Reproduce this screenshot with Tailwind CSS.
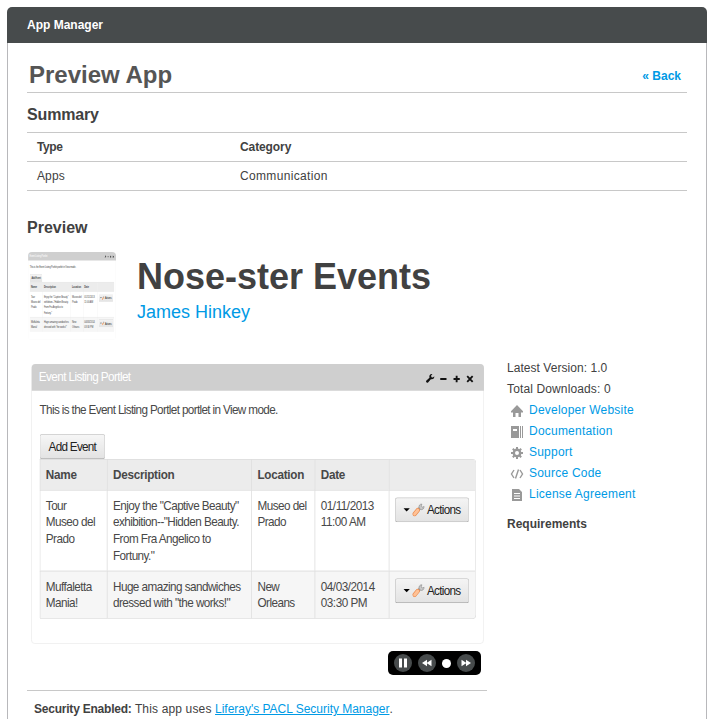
<!DOCTYPE html>
<html lang="en">
<head>
<meta charset="utf-8">
<title>App Manager</title>
<script src="https://cdn.jsdelivr.net/npm/@tailwindcss/browser@4"></script>
</head>
<body class="w-[710px] h-[719px] overflow-hidden bg-white pl-[7px] pt-[7px] font-['Liberation_Sans',Arial,sans-serif] text-[12px] leading-[21px] text-[#414141]">
<main class="w-[700px] h-[712px]">
  <header class="h-9 rounded-t-[5px] bg-[#474b4c] px-5 pt-[8px] font-bold text-white">App Manager</header>
  <div class="h-[676px] border-x border-[#b8b8bb] px-[19px] pt-[18px]">
    <div class="h-8 flex justify-between border-b border-[#c8c8c8] pl-[2px] pr-[6px]">
      <h1 class="text-[24px] leading-[28px] font-bold text-[#555]">Preview App</h1>
      <a class="pt-[5px] font-bold text-[#009ae5]">« Back</a>
    </div>
    <h2 class="h-[39px] pt-[11px] text-[16px] font-bold tracking-[-0.15px]">Summary</h2>
    <table class="w-full table-fixed border-collapse text-left">
      <colgroup><col class="w-[203px]"><col></colgroup>
      <tr class="h-[29px] border-y border-[#c8c8c8]"><th class="pl-[10px] tracking-[-0.4px]">Type</th><th class="pl-[10px] tracking-[-0.1px]">Category</th></tr>
      <tr class="h-[29px] border-b border-[#c8c8c8]"><td class="pl-[10px] tracking-[0.1px]">Apps</td><td class="pl-[10px] tracking-[0.33px]">Communication</td></tr>
    </table>
    <h2 class="h-[61px] pt-[26px] text-[16px] font-bold">Preview</h2>
    <section class="flex h-[112px]">
      <div class="ml-px h-[88px] w-[88px] shrink-0 overflow-hidden rounded-[4px]"><div id="thumb" class="h-[336px] w-[580px] origin-top-left scale-x-[0.1517] scale-y-[0.2619]"></div></div>
      <div class="ml-[21px]">
        <div class="h-[48px] pt-[3px] text-[36px] leading-[44px] font-bold">Nose-ster Events</div>
        <a class="block text-[18px] leading-[24px] text-[#009ae5]">James Hinkey</a>
      </div>
    </section>
    <section class="flex h-[355px]">
      <div class="w-[460px]">
        <div class="ml-[4px] h-[287px] w-[453px]">
          <div id="portlet" class="h-[336px] w-[580px] origin-top-left scale-x-[0.781] scale-y-[0.8333]">
            <div class="h-full rounded-[5px] border border-[#ececec] bg-white text-[15px] leading-[20px] tracking-[-0.7px] text-[#484848]">
              <div class="-mr-px -mt-px flex h-8 items-center justify-between rounded-t-[5px] bg-[#cfcfcf] pl-[9px] pr-[12px] text-white">
                <span class="tracking-[-0.76px]">Event Listing Portlet</span>
                <span class="flex items-center gap-[5px] text-[#111]">
                  <svg class="mt-[2px] h-3 w-3" viewBox="0 0 12 12"><path d="M1 9.2 5.2 5.6C4.4 2.5 6.2.6 9 1L7.2 3l.6 1.8 1.8.4L11.5 3.8C11.6 6.5 9.5 8 7 7.2L3.4 11.2C1.8 12 .2 10.6 1 9.2Z" fill="currentColor"/></svg>
                  <svg class="mt-[3px] h-3 w-3" viewBox="0 0 12 12"><path d="M2 6h8" stroke="currentColor" stroke-width="2.6"/></svg>
                  <svg class="mt-[3px] h-3 w-3" viewBox="0 0 12 12"><path d="M2 6h8M6 2v8" stroke="currentColor" stroke-width="2.4"/></svg>
                  <svg class="mt-[3px] h-3 w-3" viewBox="0 0 12 12"><path d="m2.500 2.500 7 7M9.500 2.500l-7 7" stroke="currentColor" stroke-width="2.4"/></svg>
                </span>
              </div>
              <div class="px-[10px]">
                <p class="h-[52px] pt-[13px] tracking-[-0.82px]">This is the Event Listing Portlet portlet in View mode.</p>
                <button class="block h-[30px] w-[84px] rounded-[3px] border border-[#c6c6c6] border-b-[#aaa] bg-linear-to-b from-[#f6f6f6] to-[#e3e3e3] text-[#222] tracking-[-0.93px]">Add Event</button>
                <table class="w-[559px] table-fixed border-separate border-spacing-0 overflow-hidden rounded-r-[5px] border-r border-b border-[#ddd] text-left align-top">
                  <colgroup><col class="w-[86px]"><col class="w-[185px]"><col class="w-[81px]"><col class="w-[95px]"><col></colgroup>
                  <tr class="h-[37px] bg-[#ececec] *:border-l *:border-t *:border-[#ddd] *:px-[7px] tracking-[-0.35px]"><th>Name</th><th>Description</th><th>Location</th><th>Date</th><th></th></tr>
                  <tr class="h-[97px] align-top *:border-l *:border-t *:border-[#ddd] *:px-[7px] *:pt-2 *:whitespace-nowrap">
                    <td>Tour<br>Museo del<br>Prado</td><td>Enjoy the "Captive Beauty"<br>exhibition--"Hidden Beauty.<br>From Fra Angelico to<br>Fortuny."</td><td>Museo del<br>Prado</td><td class="tracking-[-0.6px]">01/11/2013<br>11:00 AM</td>
                    <td><span class="flex h-[30px] w-[95px] items-center rounded-[3px] border border-[#c6c6c6] border-b-[#aaa] bg-linear-to-b from-[#f4f4f4] to-[#e3e3e3] pl-[10px] text-[#222] tracking-[-0.9px]"><i class="mr-[3px] border-x-[4px] border-t-[4px] border-x-transparent border-t-black"></i><svg class="mr-[3px] h-4 w-[16px] shrink-0" viewBox="0 0 16 16"><path d="m7.500 8.500 3-3.500" stroke="#999" stroke-width="3.500"/><path d="M9 5.500C8.200 3 10 .8 12.500 1L11.500 3.600l1.300 1.200L15.500 4c.2 2.500-2.700 4.500-5 3.500Z" fill="#c9c9c9" stroke="#8c8c8c" stroke-width=".8"/><path d="m3.200 13 4-4.500" stroke="#e98a4e" stroke-width="5.400" stroke-linecap="round"/><path d="m3.200 13 4-4.500" stroke="#ffc195" stroke-width="3.800" stroke-linecap="round"/></svg>Actions</span></td>
                  </tr>
                  <tr class="h-[57px] bg-[#f6f6f6] align-top *:border-l *:border-t *:border-[#ddd] *:px-[7px] *:pt-2 *:whitespace-nowrap">
                    <td>Muffaletta<br>Mania!</td><td>Huge amazing sandwiches<br>dressed with "the works!"</td><td>New<br>Orleans</td><td class="tracking-[-0.6px]">04/03/2014<br>03:30 PM</td>
                    <td><span class="flex h-[30px] w-[95px] items-center rounded-[3px] border border-[#c6c6c6] border-b-[#aaa] bg-linear-to-b from-[#f4f4f4] to-[#e3e3e3] pl-[10px] text-[#222] tracking-[-0.9px]"><i class="mr-[3px] border-x-[4px] border-t-[4px] border-x-transparent border-t-black"></i><svg class="mr-[3px] h-4 w-[16px] shrink-0" viewBox="0 0 16 16"><path d="m7.500 8.500 3-3.500" stroke="#999" stroke-width="3.500"/><path d="M9 5.500C8.200 3 10 .8 12.500 1L11.500 3.600l1.300 1.200L15.500 4c.2 2.500-2.700 4.500-5 3.500Z" fill="#c9c9c9" stroke="#8c8c8c" stroke-width=".8"/><path d="m3.200 13 4-4.500" stroke="#e98a4e" stroke-width="5.400" stroke-linecap="round"/><path d="m3.200 13 4-4.500" stroke="#ffc195" stroke-width="3.800" stroke-linecap="round"/></svg>Actions</span></td>
                  </tr>
                </table>
              </div>
            </div>
          </div>
        </div>
        <div class="ml-[361px] flex h-6 w-[93px] items-center rounded-[5px] bg-black pl-[6px]">
          <svg class="h-[18px] w-[18px]" viewBox="0 0 18 18"><circle cx="9" cy="9" r="9" fill="#474b4c"/><path d="M5 4.5h3v9H5zM10 4.5h3v9h-3z" fill="#fff"/></svg>
          <svg class="ml-[6px] h-[18px] w-[18px]" viewBox="0 0 18 18"><circle cx="9" cy="9" r="9" fill="#474b4c"/><path d="M9 5.8v6.4L4 9zM13.5 5.8v6.4L8.500 9z" fill="#fff"/></svg>
          <i class="ml-[6px] h-[9px] w-[9px] rounded-full bg-white"></i>
          <svg class="ml-[6px] h-[18px] w-[18px]" viewBox="0 0 18 18"><circle cx="9" cy="9" r="9" fill="#474b4c"/><path d="M4.500 5.800v6.400L9.500 9zM9 5.800v6.400L14 9z" fill="#fff"/></svg>
        </div>
        <div class="mt-[15px] h-[29px] border-t border-[#c8c8c8] pl-[7px] pt-[8px] whitespace-nowrap"><b class="tracking-[-0.22px]">Security Enabled:</b><span class="tracking-[0.15px]"> This app uses </span><a class="tracking-[-0.02px] text-[#009ae5] underline">Liferay's PACL Security Manager</a>.</div>
      </div>
      <aside class="ml-[20px] -mt-[6px] whitespace-nowrap">
        <div class="tracking-[0.05px]">Latest Version: 1.0</div>
        <div class="tracking-[0.13px]">Total Downloads: 0</div>
        <ul class="pl-[3px] text-[#009ae5] tracking-[0.22px]">
          <li class="flex h-[21px] items-center gap-[5px]"><svg class="h-[14px] w-[14px] text-[#999]" viewBox="0 0 14 14"><path d="M7 1 13 7.200V8.500H11V13H8.500V9H5.500v4H3V8.500H1V7.200Z" fill="currentColor"/></svg>Developer Website</li>
          <li class="flex h-[21px] items-center gap-[5px]"><svg class="h-[14px] w-[14px] text-[#999]" viewBox="0 0 14 14"><path fill-rule="evenodd" d="M1 1h8v12H1zM3 4v2h4V4zM10 1h1v12h-1zM12 1h1v12h-1z" fill="currentColor"/></svg>Documentation</li>
          <li class="flex h-[21px] items-center gap-[5px]"><svg class="h-[14px] w-[14px] text-[#999]" viewBox="0 0 14 14"><g stroke="currentColor" fill="none"><circle cx="7" cy="7" r="3.200" stroke-width="2.400"/><path d="M7 1v2.500M7 10.500V13M1 7h2.500M10.500 7H13M2.800 2.800l1.700 1.700M9.500 9.500l1.700 1.700M11.200 2.800 9.500 4.500M4.500 9.500l-1.700 1.700" stroke-width="2"/></g></svg>Support</li>
          <li class="flex h-[21px] items-center gap-[5px]"><svg class="h-[14px] w-[14px] text-[#999]" viewBox="0 0 14 14"><path d="M4 3 1.500 7 4 11M10 3l2.500 4L10 11M8.500 2.500l-3 9" fill="none" stroke="currentColor" stroke-width="1.400"/></svg>Source Code</li>
          <li class="flex h-[21px] items-center gap-[5px]"><svg class="h-[14px] w-[14px] text-[#999]" viewBox="0 0 14 14"><path fill-rule="evenodd" d="M2 1h7l3 3v9H2zM4 5v1h6V5zM4 7.500v1h6v-1zM4 10v1h6v-1z" fill="currentColor"/></svg>License Agreement</li>
        </ul>
        <div class="mt-[9px] font-bold">Requirements</div>
      </aside>
    </section>
  </div>
</main>
<script>
  // The app icon is a reduced view of the portlet.
  document.getElementById('thumb').append(document.querySelector('#portlet > div').cloneNode(true));
</script>
</body>
</html>
